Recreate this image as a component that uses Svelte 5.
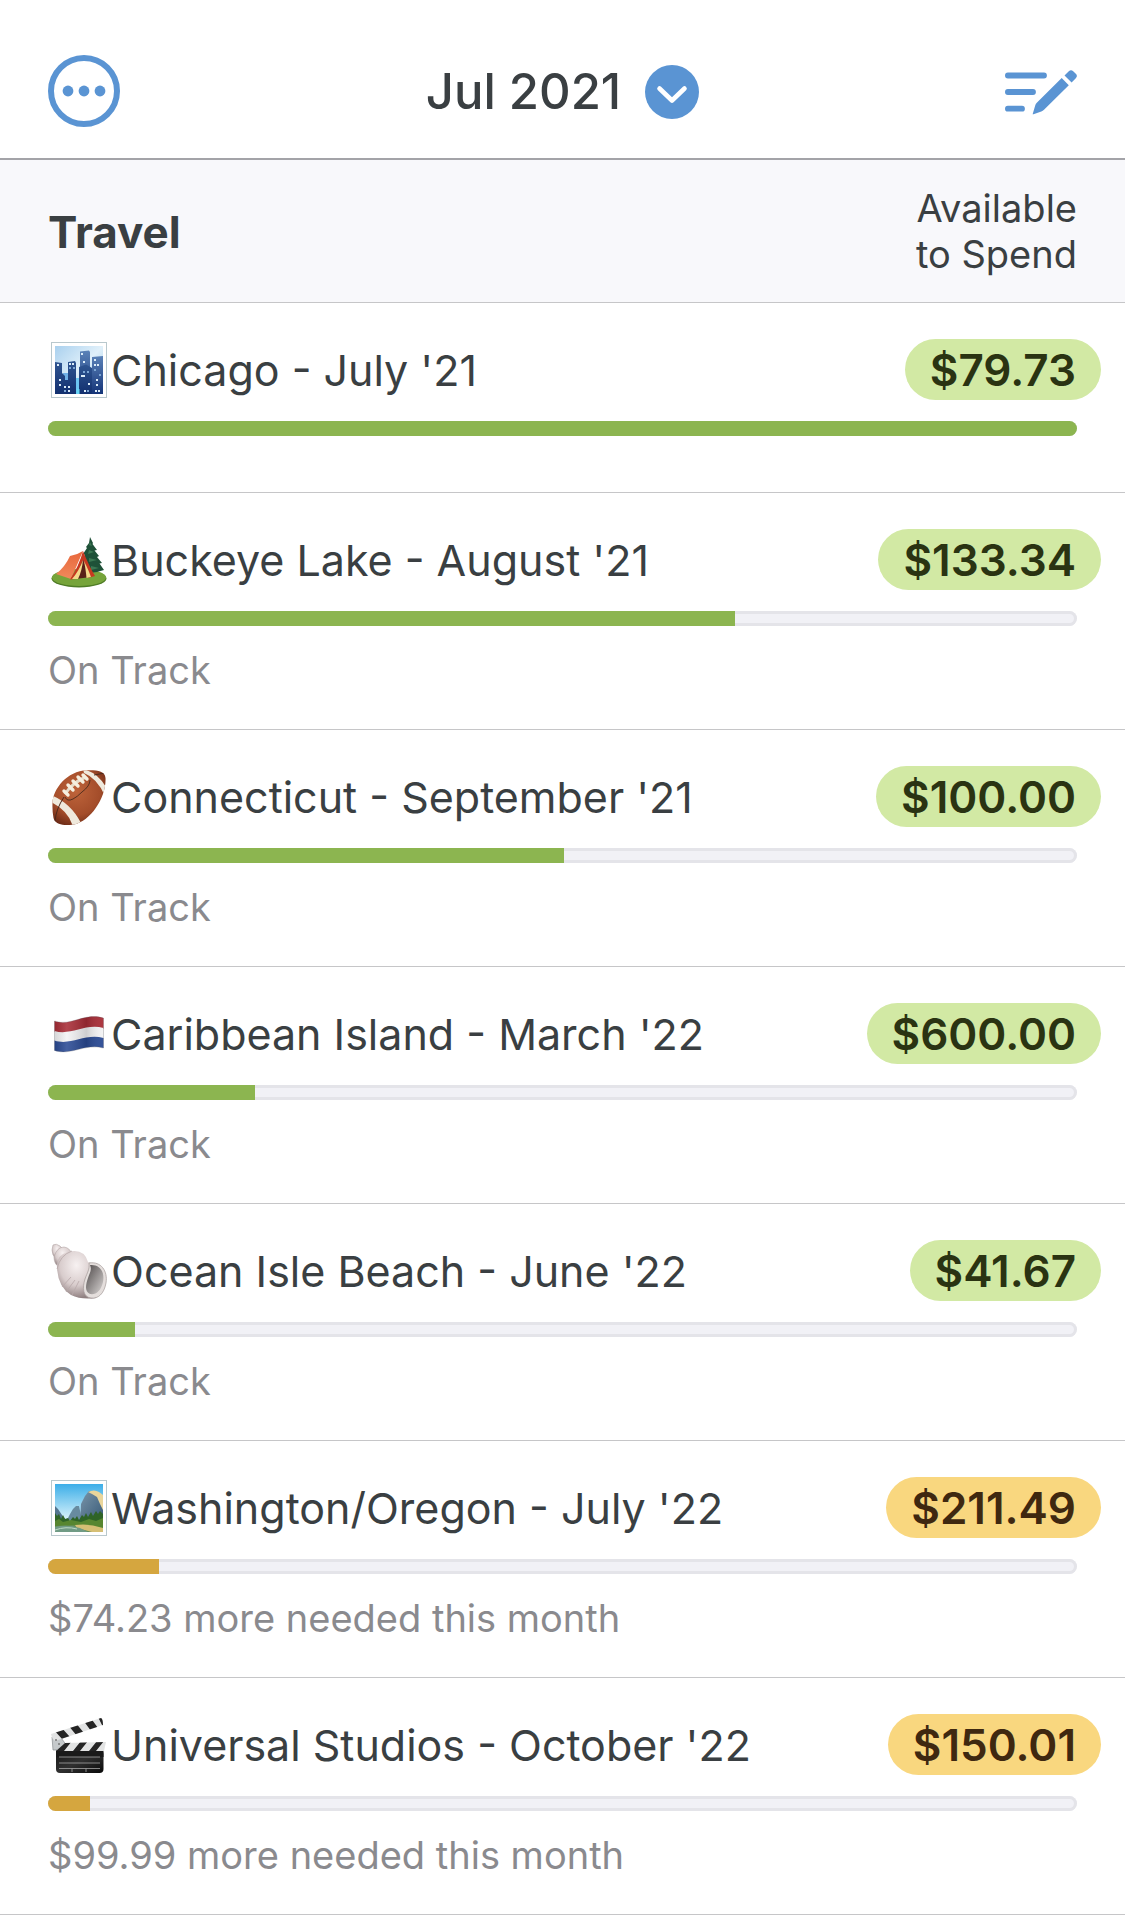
<script>
    let month = 'Jul 2021';
    let group = 'Travel';

    let categories = [
        { icon: 'city', name: "Chicago - July '21", available: '$79.73', progress: 100, state: 'funded', status: '' },
        { icon: 'camping', name: "Buckeye Lake - August '21", available: '$133.34', progress: 66.8, state: 'funded', status: 'On Track' },
        { icon: 'football', name: "Connecticut - September '21", available: '$100.00', progress: 50.1, state: 'funded', status: 'On Track' },
        { icon: 'flag', name: "Caribbean Island - March '22", available: '$600.00', progress: 20.1, state: 'funded', status: 'On Track' },
        { icon: 'shell', name: "Ocean Isle Beach - June '22", available: '$41.67', progress: 8.5, state: 'funded', status: 'On Track' },
        { icon: 'park', name: "Washington/Oregon - July '22", available: '$211.49', progress: 10.8, state: 'under', status: '$74.23 more needed this month' },
        { icon: 'clapper', name: "Universal Studios - October '22", available: '$150.01', progress: 4.1, state: 'under', status: '$99.99 more needed this month' }
    ];
</script>

<header>
    <button class="menu" aria-label="Menu">
        <svg viewBox="0 0 72 72">
            <circle cx="36" cy="36" r="33" fill="none" stroke="currentColor" stroke-width="6" />
            <circle cx="20" cy="36" r="5.4" fill="currentColor" />
            <circle cx="36" cy="36" r="5.4" fill="currentColor" />
            <circle cx="52" cy="36" r="5.4" fill="currentColor" />
        </svg>
    </button>
    <button class="month">
        <span>{month}</span>
        <svg viewBox="0 0 54 54">
            <circle cx="27" cy="27" r="27" fill="currentColor" />
            <path d="M14.5 23.5 27 35.5 39.5 23.5" fill="none" stroke="#fff" stroke-width="4.6" stroke-linecap="round" stroke-linejoin="round" />
        </svg>
    </button>
    <button class="edit" aria-label="Edit budget">
        <svg viewBox="0 0 72 72">
            <path d="M2.9 20.5H39M2.9 37H28M2.9 53.7H17" fill="none" stroke="currentColor" stroke-width="5.8" stroke-linecap="round" />
            <path d="M27.7 59 30.2 50.5Q30.6 49 31.8 47.8L56.7 23.1 63.8 30.2 39 54.8Q37.8 56 36.3 56.5L28.5 59.2Q27.4 59.5 27.7 59Z" fill="currentColor" />
            <path d="M59.5 20.6 63.8 16.3Q66 14.2 68.2 16.3L70.8 18.8Q73 21 70.8 23.2L66.6 27.5Z" fill="currentColor" />
        </svg>
    </button>
</header>

<main>
    <div class="group">
        <h1>{group}</h1>
        <p>Available<br />to Spend</p>
    </div>

    <ul>
        {#each categories as category}
            <li class={category.state}>
                <div class="line">
                    <svg class="emoji" viewBox="0 0 56 56" aria-hidden="true">
                        {#if category.icon === 'city'}
                            <defs>
                                <linearGradient id="citySky" x1="0" y1="0" x2="1" y2="1">
                                    <stop offset="0" stop-color="#a9d0ee" />
                                    <stop offset=".5" stop-color="#e0f0fa" />
                                    <stop offset="1" stop-color="#8fc4ea" />
                                </linearGradient>
                                <linearGradient id="cityTower" x1="0" y1="0" x2="0" y2="1">
                                    <stop offset="0" stop-color="#5b82b8" />
                                    <stop offset="1" stop-color="#143478" />
                                </linearGradient>
                                <linearGradient id="cityDark" x1="0" y1="0" x2="0" y2="1">
                                    <stop offset="0" stop-color="#2f5591" />
                                    <stop offset="1" stop-color="#12306f" />
                                </linearGradient>
                            </defs>
                            <rect x=".5" y=".5" width="55" height="55" fill="#fff" stroke="#b9c8cd" />
                            <rect x="4" y="4" width="48" height="48" fill="url(#citySky)" />
                            <path d="M12 31H17V52H12Z" fill="#6fb0e6" />
                            <path d="M25 36H29V52H25Z" fill="#6dc6f2" />
                            <path d="M29 9.5 38 8.5 39 10V52H29Z" fill="url(#cityTower)" />
                            <path d="M41 15 52 14V52H41Z" fill="url(#cityTower)" />
                            <path d="M4 20 11 21V31L14 34V52H4Z" fill="url(#cityDark)" />
                            <path d="M17 20 24 19 25 21V52H14V38H17Z" fill="url(#cityDark)" />
                            <path d="M28 25 35 22.5 41 26V52H28Z" fill="url(#cityDark)" />
                            <path d="M25.5 47H28.5V52H25.5Z" fill="#67d4f5" />
                            <path d="M30 11h2v2h-2zM32 19h2v2h-2zM43 17h2v2h-2zM6 22h2v2h-2zM18 21h2v2h-2zM21 21h2v2h-2zM43 22h2v2h-2zM46 22h2v2h-2zM30 33h4v2h-4zM45 37h2v2h-2zM45 42h2v2h-2zM8 37h2v2h-2zM8 42h2v2h-2zM13 44h2v2h-2zM17 44h2v2h-2zM17 48h2v2h-2zM33 48h2v2h-2zM37 41h2v2h-2zM44 48h2v2h-2zM47 48h2v2h-2z" fill="#dcecf8" />
                            <path d="M18 25h2v2h-2zM22 25h2v2h-2zM32 29h2v2h-2zM36 29h2v2h-2zM43 27h2v2h-2zM48 32h2v2h-2zM36 48h2v2h-2zM13 48h2v2h-2z" fill="#7ca6d4" />
                        {:else if category.icon === 'camping'}
                            <defs>
                                <linearGradient id="tentSide" x1="0" y1="0" x2="0" y2="1">
                                    <stop offset="0" stop-color="#e8663b" />
                                    <stop offset="1" stop-color="#f08a5c" />
                                </linearGradient>
                            </defs>
                            <ellipse cx="28" cy="46.5" rx="27.5" ry="9" fill="#4f7c26" />
                            <ellipse cx="28" cy="45.5" rx="27" ry="8.5" fill="#76a43a" />
                            <path d="M37 34H41V44H37Z" fill="#5c3b22" />
                            <path d="M39 5 42 11 41.5 12 46 18 43.5 18.5 48 24 46 25 51 31 48.5 31.5 53 38 46 40 38 41 31 36 34 29 31 29 34 23 32 22 36 16 35 15 38 11Z" fill="#1f5138" />
                            <path d="M39 10 41 14 38 13ZM38 18 43 20 37 22ZM38 26 46 28 38 30ZM40 34 48 36 40 38Z" fill="#3c7853" />
                            <path d="M19 24Q26 23 32 19L20 47 5 42Q14 35 19 24Z" fill="url(#tentSide)" />
                            <path d="M32 19Q38 34 44 44L37 46 32 29 24 47 19 47.5Q28 34 32 19Z" fill="#c73820" />
                            <path d="M32 28 40 45 24 47Z" fill="#582018" />
                            <path d="M32 28Q31 39 27 47L21 47Q28 39 32 28ZM33 29Q38 39 40 45L35.5 46Q35 39 33 29Z" fill="#f3d98a" />
                        {:else if category.icon === 'football'}
                            <defs>
                                <radialGradient id="ball" cx=".45" cy=".4" r=".65">
                                    <stop offset="0" stop-color="#bd633a" />
                                    <stop offset=".65" stop-color="#a44d2a" />
                                    <stop offset="1" stop-color="#6c2b17" />
                                </radialGradient>
                                <clipPath id="ballShape">
                                    <path d="M1.5 34C2 20 16 2 36 1.3C46 1 54 2 54.5 9C55.5 28 40 52 23 55.5C14 57 4 56 2.5 49C1.5 44 1.3 39 1.5 34Z" />
                                </clipPath>
                            </defs>
                            <g clip-path="url(#ballShape)">
                                <rect width="56" height="56" fill="url(#ball)" />
                                <path d="M0 26Q20 34 30 54L22 58Q18 42 0 33Z" fill="#efe9dc" />
                                <path d="M32 0Q48 4 56 20L54 27Q46 9 33 4Z" fill="#efe9dc" />
                                <path d="M4 52Q5 40 13 28M43 6 54 4" fill="none" stroke="#4c2a1c" stroke-width="1" />
                            </g>
                            <path d="M14 28Q16 33 22 30Q26 28 31 23Q39 17 39 11" fill="none" stroke="#55301f" stroke-width="1" />
                            <path d="M14 25Q22 13 35 8" fill="none" stroke="#e6ddca" stroke-width="3" />
                            <path d="M13 22 17 26M17 16 22 21M22 12 27 17M27 8 32 13M32 6 36 10" fill="none" stroke="#f5efdf" stroke-width="3.4" stroke-linecap="round" />
                        {:else if category.icon === 'flag'}
                            <defs>
                                <linearGradient id="flagShade">
                                    <stop offset="0" stop-color="#000" stop-opacity=".12" />
                                    <stop offset=".25" stop-color="#fff" stop-opacity=".12" />
                                    <stop offset=".65" stop-color="#000" stop-opacity=".15" />
                                    <stop offset="1" stop-color="#fff" stop-opacity=".05" />
                                </linearGradient>
                            </defs>
                            <path d="M3.5 15C20 21 33 6 52.5 12V23C34 18 20 31 3.5 26Z" fill="#a82c36" />
                            <path d="M3.5 25C20 30 34 17 52.5 22V33C34 28 20 40 3.5 35Z" fill="#f3f3f4" />
                            <path d="M3.5 34.5C20 40 34 27 52.5 32V42C34 37 20 50 3.5 44.5Z" fill="#2a4a94" />
                            <path d="M3.5 15C20 21 33 6 52.5 12V42C34 37 20 50 3.5 44.5Z" fill="url(#flagShade)" stroke="#56565e" stroke-opacity=".35" stroke-width=".8" />
                        {:else if category.icon === 'shell'}
                            <defs>
                                <radialGradient id="shellBody" cx=".5" cy=".3" r=".7">
                                    <stop offset="0" stop-color="#f7f1f1" />
                                    <stop offset=".6" stop-color="#d8cccc" />
                                    <stop offset="1" stop-color="#8f7f80" />
                                </radialGradient>
                                <linearGradient id="shellInside" x1="0" y1="0" x2="1" y2="1">
                                    <stop offset="0" stop-color="#4d4848" />
                                    <stop offset="1" stop-color="#d9d5d4" />
                                </linearGradient>
                            </defs>
                            <path d="M2 2Q5 0 9 3Q13 6 9 11L5 16Q1 12 1 7Z" fill="url(#shellBody)" stroke="#b3a6a6" stroke-width=".6" />
                            <path d="M3 14Q6 4 13 4Q19 5 20 10L8 24Q3 21 3 14Z" fill="url(#shellBody)" stroke="#b3a6a6" stroke-width=".6" />
                            <path d="M6 25Q5 12 17 9Q33 5 37 19L44 21 45 55Q30 57 20 52Q7 44 6 25Z" fill="url(#shellBody)" />
                            <path d="M6 26Q9 12 21 8M11 44 20 34M15 49 24 37M21 52 28 38" fill="none" stroke="#b7a8a9" stroke-width=".8" />
                            <path d="M38 20C50 18 57 28 55 40C53 51 47 56 40 55C32 54 31 45 34 36C36 30 39 26 38 20Z" fill="#e4dedc" stroke="#a39998" stroke-width=".7" />
                            <path d="M39 22C49 21 54 29 52 39C50 48 45 52 39 51C33 48 35 41 37 35C39 29 41 27 39 22Z" fill="url(#shellInside)" />
                        {:else if category.icon === 'park'}
                            <defs>
                                <linearGradient id="parkSky" x1="0" y1="0" x2="0" y2="1">
                                    <stop offset="0" stop-color="#3caee8" />
                                    <stop offset=".7" stop-color="#d1effa" />
                                </linearGradient>
                                <linearGradient id="cliff" x1="0" y1="0" x2="1" y2="1">
                                    <stop offset="0" stop-color="#7a95a9" />
                                    <stop offset="1" stop-color="#395b78" />
                                </linearGradient>
                            </defs>
                            <rect x=".5" y=".5" width="55" height="55" fill="#fff" stroke="#b9c8cd" />
                            <rect x="4" y="4" width="48" height="48" fill="url(#parkSky)" />
                            <path d="M4 26 7 29 11 35 15 40H4Z" fill="#52758f" />
                            <path d="M16 40 19 34 22 29 25 26H28L31 40Z" fill="#688ba0" />
                            <path d="M29 39 30 24 34 16 38 11 46 12 52 20V41Z" fill="url(#cliff)" />
                            <path d="M37 12Q43 9 48 12L52 15V30L49 24 46 17 41 14Z" fill="#ead69b" />
                            <rect x="4" y="41" width="48" height="11" fill="#668f58" />
                            <path d="M4 44V33L6 36 8 34 10 39 12 35 14 39 17 38 19 41 22 37 24 39 26 36 28 40 31 35 33 37 35 33 37 37 40 32 42 36 45 31 47 34 49 31 52 34V47L30 44Z" fill="#2f6427" />
                            <path d="M4 41 8 39 12 42 20 40 30 42 38 39 45 41 52 38V48L28 45 4 46Z" fill="#578630" />
                            <path d="M24 45Q38 43 52 48V52H41L26 48Z" fill="#d6bf74" />
                            <path d="M4 47Q15 44 29 48L37 52H4Z" fill="#709b85" />
                            <path d="M4 50Q15 46 26 49" fill="none" stroke="#bdd9c5" />
                        {:else}
                            <defs>
                                <linearGradient id="board" x1="0" y1="0" x2="1" y2="1">
                                    <stop offset="0" stop-color="#161616" />
                                    <stop offset=".5" stop-color="#303030" />
                                    <stop offset="1" stop-color="#090909" />
                                </linearGradient>
                                <clipPath id="clapTop"><path d="M0 17 50 1Q52 2 52 8L4 24Q1 22 0 17Z" /></clipPath>
                                <clipPath id="clapBottom"><path d="M5 34 14 26 55 25 53 34Z" /></clipPath>
                            </defs>
                            <path d="M1 20 8 18 16 29 5 33H2Z" fill="#c5c9cb" stroke="#898e91" stroke-width=".7" />
                            <g clip-path="url(#clapTop)">
                                <rect width="56" height="28" fill="#e2e3e3" />
                                <path d="M2 12 12 23 19 20 9 9ZM17 8 26 19 33 16 24 5ZM32 3 40 14 47 11 39 0ZM46-2 52 10 59 8 53-4Z" fill="#242424" />
                            </g>
                            <rect x="5" y="33" width="47.5" height="23" rx="4" fill="url(#board)" />
                            <path d="M5 33H52.5V40H5Z" fill="#1a1a1a" />
                            <g clip-path="url(#clapBottom)">
                                <rect y="24" width="56" height="11" fill="#e2e3e3" />
                                <path d="M5 34 13 24H21L13 34ZM22 34 30 24H37L29 34ZM38 34 46 24H53L45 34Z" fill="#242424" />
                            </g>
                            <path d="M8 40H49M8 46H49M8 51.5H49M21 51.5V55M35 51.5V55" fill="none" stroke="#a5a5a5" stroke-width=".8" />
                            <circle cx="8" cy="27" r="1" fill="#777" />
                            <circle cx="5" cy="23" r="1" fill="#777" />
                        {/if}
                    </svg>
                    <h2>{category.name}</h2>
                    <span class="amount">{category.available}</span>
                </div>
                <div class="bar" role="progressbar" aria-label={category.name} aria-valuenow={category.progress} aria-valuemin="0" aria-valuemax="100">
                    <div class="fill" style="width: {category.progress}%"></div>
                </div>
                {#if category.status}
                    <p class="status">{category.status}</p>
                {/if}
            </li>
        {/each}
    </ul>
</main>

<style>
    :global(body) {
        margin: 0;
        background: #fff;
        color: #3a3f42;
        font-family: Inter, "Liberation Sans", sans-serif;
    }

    header {
        display: grid;
        grid-template-columns: 1fr auto 1fr;
        align-items: center;
        padding: 55px 48px 31px;
        border-bottom: 2px solid #a3a3a8;
    }

    button {
        display: flex;
        align-items: center;
        padding: 0;
        border: none;
        background: none;
        color: #5a94d3;
        font: inherit;
        cursor: pointer;
    }

    .menu svg,
    .edit svg {
        display: block;
        width: 72px;
        height: 72px;
    }

    .edit {
        justify-self: end;
    }

    .month {
        gap: 24px;
        padding-top: 2px;
        font-size: 49px;
        font-weight: 500;
        line-height: 60px;
    }
    .month span {
        color: #3a3f42;
    }
    .month svg {
        width: 54px;
        height: 54px;
    }

    .group {
        display: flex;
        align-items: center;
        justify-content: space-between;
        padding: 25px 48px;
        border-bottom: 1px solid #c6c6c8;
        background: #f8f8fb;
    }

    h1, h2, p {
        margin: 0;
    }

    h1 {
        padding-top: 2px;
        font-size: 44px;
        font-weight: 700;
        line-height: 60px;
    }

    p {
        font-size: 38px;
        line-height: 46px;
    }

    .group p {
        text-align: right;
    }

    ul {
        margin: 0;
        padding: 0;
        list-style: none;
    }

    li {
        padding: 36px 48px;
        border-bottom: 1px solid #c6c6c8;
    }
    li:first-child {
        padding-bottom: 56px;
    }

    .line {
        display: flex;
        align-items: center;
        margin-right: -24px;
        padding-left: 3px;
    }

    .emoji {
        flex: none;
        width: 56px;
        height: 56px;
        margin-right: 4px;
    }

    h2 {
        flex: 1;
        font-size: 43px;
        font-weight: 400;
        line-height: 60px;
        white-space: nowrap;
    }

    .amount {
        padding: 1px 25px 0;
        border-radius: 31px;
        background: #d2e9a4;
        color: #2a3312;
        font-size: 44px;
        font-weight: 600;
        line-height: 60px;
    }
    .under .amount {
        background: #f9d77f;
        color: #3f2810;
    }

    .bar {
        height: 15px;
        margin-top: 21px;
        border-radius: 8px;
        background: #f1f1f6;
        box-shadow: inset 0 0 0 3px #e4e4e9;
        overflow: hidden;
    }

    .fill {
        height: 100%;
        background: #8cb550;
    }
    .under .fill {
        background: #d5a63f;
    }

    .status {
        margin-top: 21px;
        color: #8a8a8e;
    }
</style>
